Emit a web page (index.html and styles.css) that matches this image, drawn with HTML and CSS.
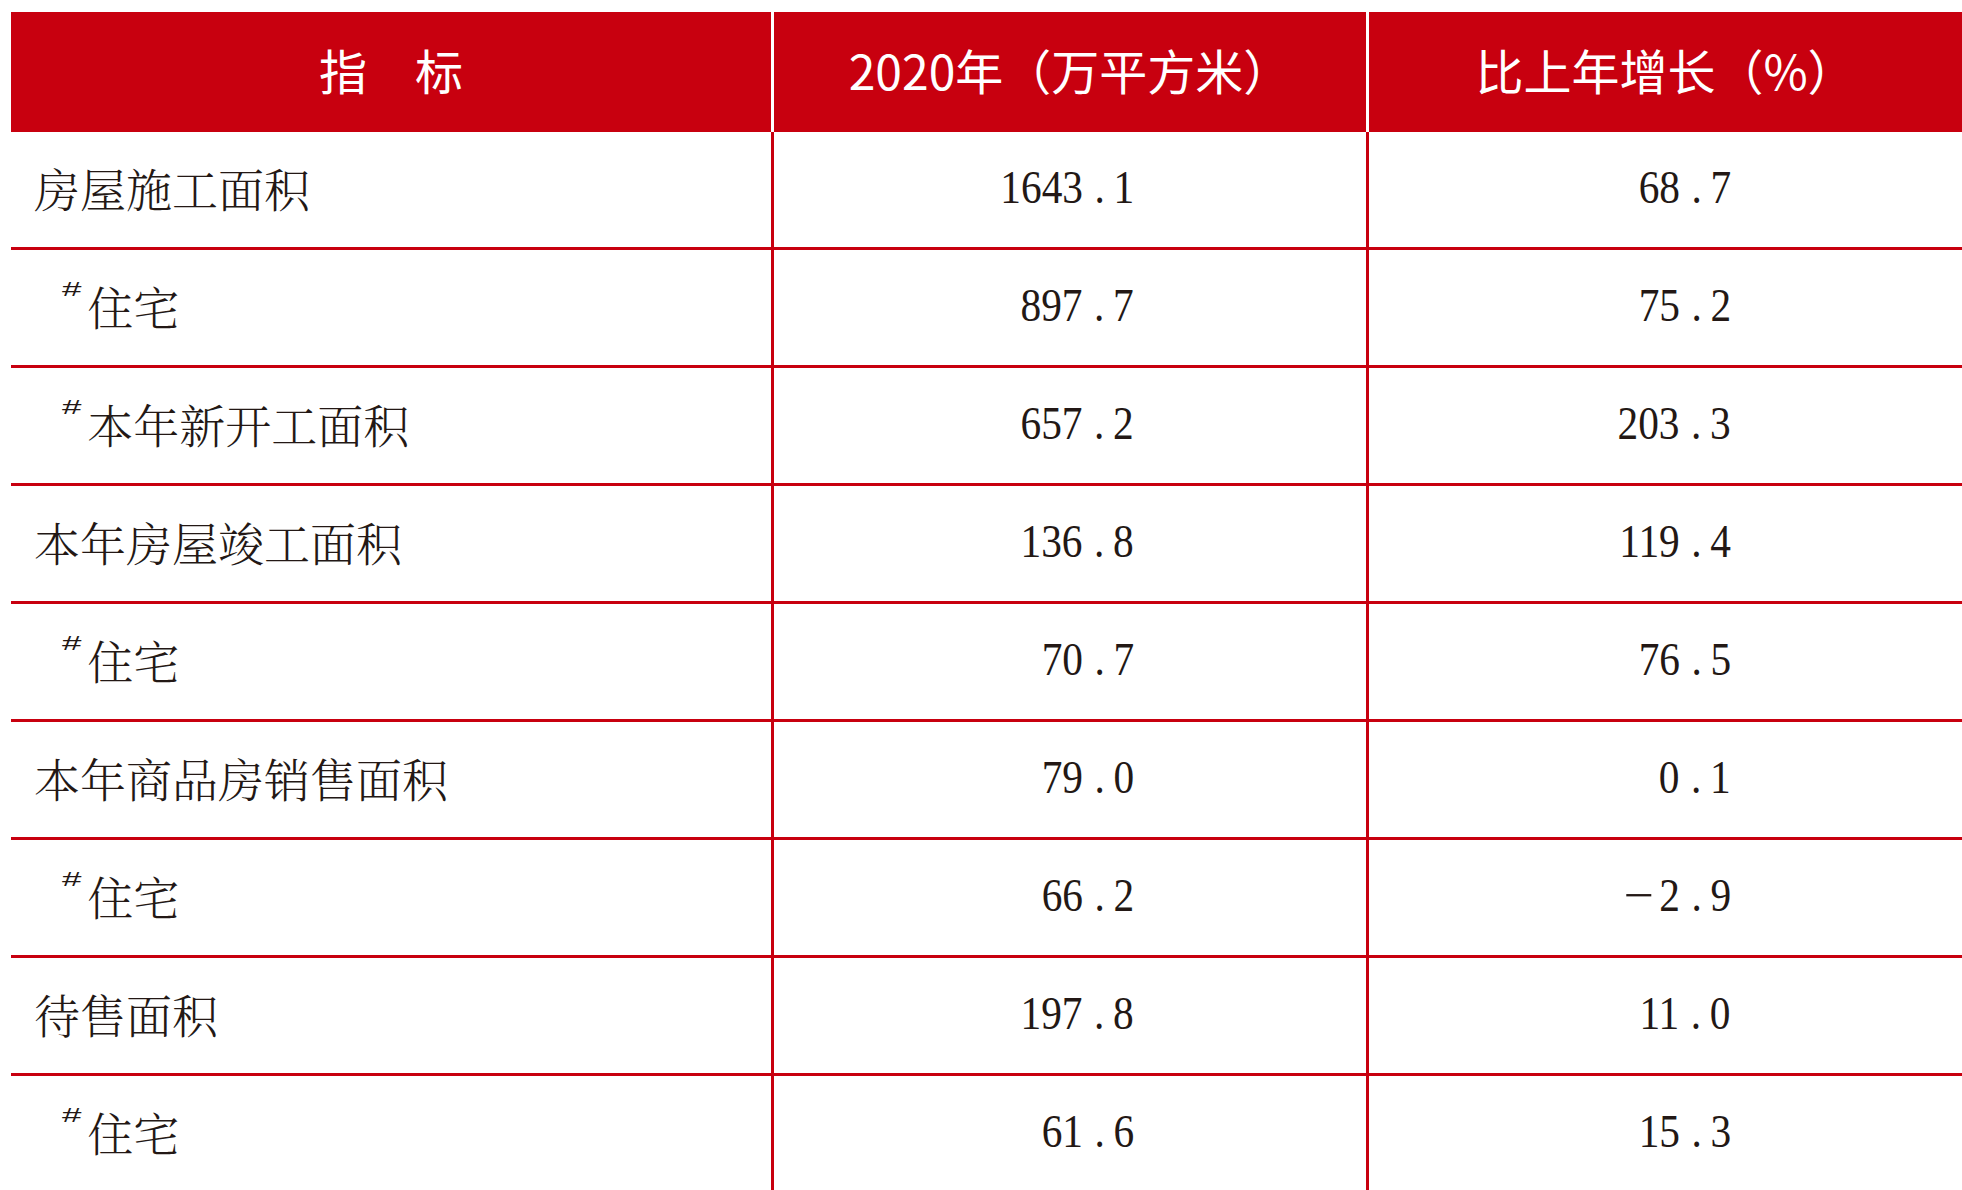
FILE: index.html
```html
<!DOCTYPE html>
<html lang="zh-CN">
<head>
<meta charset="utf-8">
<title>房地产开发</title>
<link rel="stylesheet" href="styles.css">
</head>
<body>
<div class="sheet" role="table">
  <div class="row head" role="row">
    <div class="cell hcell" role="columnheader">指　标</div>
    <div class="cell hcell" role="columnheader">2020年（万平方米）</div>
    <div class="cell hcell" role="columnheader">比上年增长（%）</div>
  </div>
  <div class="row" role="row">
    <div class="cell label" role="cell">房屋施工面积</div>
    <div class="cell num c2" role="cell"><span class="n">1643<span class="dot">.</span>1</span></div>
    <div class="cell num c3" role="cell"><span class="n">68<span class="dot">.</span>7</span></div>
  </div>
  <div class="row" role="row">
    <div class="cell label" role="cell"><span class="mark">#</span>住宅</div>
    <div class="cell num c2" role="cell"><span class="n">897<span class="dot">.</span>7</span></div>
    <div class="cell num c3" role="cell"><span class="n">75<span class="dot">.</span>2</span></div>
  </div>
  <div class="row" role="row">
    <div class="cell label" role="cell"><span class="mark">#</span>本年新开工面积</div>
    <div class="cell num c2" role="cell"><span class="n">657<span class="dot">.</span>2</span></div>
    <div class="cell num c3" role="cell"><span class="n">203<span class="dot">.</span>3</span></div>
  </div>
  <div class="row" role="row">
    <div class="cell label" role="cell">本年房屋竣工面积</div>
    <div class="cell num c2" role="cell"><span class="n">136<span class="dot">.</span>8</span></div>
    <div class="cell num c3" role="cell"><span class="n">119<span class="dot">.</span>4</span></div>
  </div>
  <div class="row" role="row">
    <div class="cell label" role="cell"><span class="mark">#</span>住宅</div>
    <div class="cell num c2" role="cell"><span class="n">70<span class="dot">.</span>7</span></div>
    <div class="cell num c3" role="cell"><span class="n">76<span class="dot">.</span>5</span></div>
  </div>
  <div class="row" role="row">
    <div class="cell label" role="cell">本年商品房销售面积</div>
    <div class="cell num c2" role="cell"><span class="n">79<span class="dot">.</span>0</span></div>
    <div class="cell num c3" role="cell"><span class="n">0<span class="dot">.</span>1</span></div>
  </div>
  <div class="row" role="row">
    <div class="cell label" role="cell"><span class="mark">#</span>住宅</div>
    <div class="cell num c2" role="cell"><span class="n">66<span class="dot">.</span>2</span></div>
    <div class="cell num c3" role="cell"><span class="n"><span class="minus">−</span>2<span class="dot">.</span>9</span></div>
  </div>
  <div class="row" role="row">
    <div class="cell label" role="cell">待售面积</div>
    <div class="cell num c2" role="cell"><span class="n">197<span class="dot">.</span>8</span></div>
    <div class="cell num c3" role="cell"><span class="n">11<span class="dot">.</span>0</span></div>
  </div>
  <div class="row" role="row">
    <div class="cell label" role="cell"><span class="mark">#</span>住宅</div>
    <div class="cell num c2" role="cell"><span class="n">61<span class="dot">.</span>6</span></div>
    <div class="cell num c3" role="cell"><span class="n">15<span class="dot">.</span>3</span></div>
  </div>
</div>
</body>
</html>
```
FILE: styles.css
```css
html, body {
  margin: 0;
  padding: 0;
  background: #ffffff;
  height: 1190px;
  overflow: hidden;
}

.sheet {
  margin: 12px 0 0 11px;
  width: 1951px;
  display: grid;
  grid-template-columns: 760px 595px 596px;
}

.row {
  display: contents;
}

.cell {
  box-sizing: border-box;
  height: 118px;
  padding-bottom: 5px;
  display: flex;
  align-items: center;
  border-bottom: 3px solid #c8000f;
  color: #231815;
}

.cell + .cell {
  border-left: 3px solid #c8000f;
}

.head .cell {
  height: 120px;
  padding-bottom: 7px;
  border-bottom: none;
  background: #c8000f;
  color: #ffffff;
  justify-content: center;
  font-family: "Noto Sans CJK SC", "Noto Sans", sans-serif;
  font-size: 48px;
  font-weight: 400;
}

.head .cell + .cell {
  border-left: 3px solid #ffffff;
}

.label {
  padding-left: 23px;
  font-family: "Noto Serif CJK SC", "Noto Sans CJK SC", serif;
  font-size: 46px;
  font-weight: 300;
  white-space: nowrap;
}

.mark {
  display: inline-block;
  margin-left: 28px;
  margin-right: 14px;
  font-family: "Liberation Sans", sans-serif;
  font-size: 20px;
  font-weight: 400;
  line-height: 1;
  transform: scaleX(1.75) translateY(-16px);
  transform-origin: left center;
}

.num {
  justify-content: flex-end;
  font-family: "Liberation Serif", "Times New Roman", serif;
  font-size: 47px;
}

.n {
  display: inline-block;
  white-space: nowrap;
  transform: scaleX(0.88);
  transform-origin: right center;
}

.dot {
  margin-left: 13px;
  margin-right: 10px;
}

.minus {
  display: inline-block;
  margin-right: 6px;
  transform: scaleX(1.3);
  transform-origin: right center;
}

.c2 {
  padding-right: 232px;
}

.c3 {
  padding-right: 231px;
}
```
